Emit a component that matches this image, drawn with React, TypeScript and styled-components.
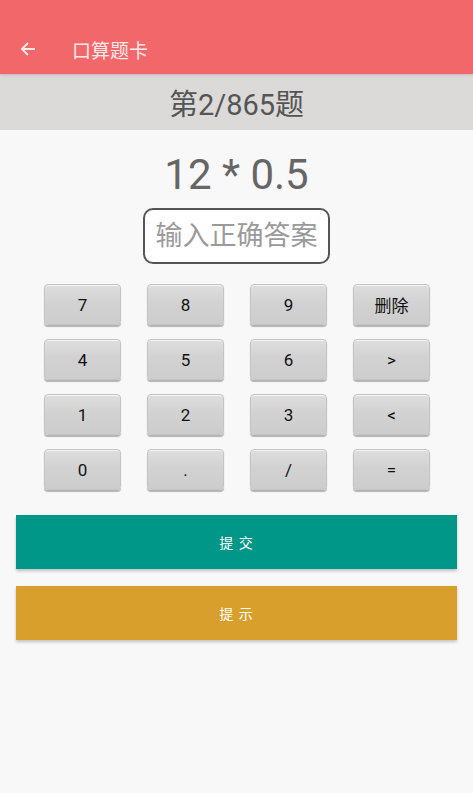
import React from "react";
import styled, { createGlobalStyle } from "styled-components";

const GlobalStyle = createGlobalStyle`
  html, body {
    margin: 0;
    padding: 0;
    background: #f8f8f8;
    font-family: Roboto, "Noto Sans CJK SC", sans-serif;
  }
`;

const Page = styled.div`
  width: 473px;
  min-height: 793px;
  background: #f8f8f8;
  display: flex;
  flex-direction: column;
`;

const TopBar = styled.header`
  height: 74px;
  background: #f26769;
  display: flex;
  align-items: center;
  padding: 24px 0 0 18px;
  box-sizing: border-box;
  position: relative;
  z-index: 1;
  box-shadow: 0 1px 3px rgba(0, 0, 0, 0.15);
`;

const BackButton = styled.button`
  width: 20px;
  height: 20px;
  padding: 0;
  border: none;
  background: none;
  display: flex;
  align-items: center;
  justify-content: center;
  margin-right: 34px;
`;

const Title = styled.h1`
  margin: 0;
  font-size: 19px;
  font-weight: 400;
  color: #fde9e9;
`;

const Counter = styled.div`
  height: 56px;
  background: #dcdad9;
  display: flex;
  align-items: center;
  justify-content: center;
  font-size: 29px;
  color: #555;
`;

const Question = styled.div`
  text-align: center;
  font-size: 42px;
  color: #666;
  margin-top: 18px;
  line-height: 54px;
`;

const AnswerInput = styled.input`
  display: block;
  margin: 6px auto 0;
  width: 187px;
  height: 56px;
  box-sizing: border-box;
  border: 2px solid #555;
  border-radius: 10px;
  background: #fff;
  font-family: Roboto, "Noto Sans CJK SC", sans-serif;
  font-size: 27px;
  text-align: center;
  color: #333;
  padding: 0;
  outline: none;

  &::placeholder {
    color: #9a9a9a;
  }
`;

const Keypad = styled.div`
  display: grid;
  grid-template-columns: repeat(4, 77px);
  grid-auto-rows: 41px;
  column-gap: 26px;
  row-gap: 14px;
  width: 386px;
  margin: 20px 0 0 44px;
`;

const Key = styled.button`
  border: 1px solid #c4c4c4;
  border-radius: 4px;
  background: linear-gradient(180deg, #dedede 0%, #d2d2d2 45%, #cdcdcd 100%);
  box-shadow: 0 2px 1px rgba(0, 0, 0, 0.28), inset 0 1px 0 rgba(255, 255, 255, 0.7);
  font-family: Roboto, "Noto Sans CJK SC", sans-serif;
  font-size: 17px;
  color: #111;
  padding: 0;
`;

const ActionButton = styled.button<{ $bg: string }>`
  display: block;
  width: 441px;
  height: 54px;
  margin: 0 0 0 16px;
  border: none;
  background: ${(p) => p.$bg};
  color: #fff;
  font-family: Roboto, "Noto Sans CJK SC", sans-serif;
  font-size: 14px;
  letter-spacing: 1px;
  box-shadow: 0 2px 3px rgba(0, 0, 0, 0.22);
`;

const Actions = styled.div`
  display: flex;
  flex-direction: column;
  gap: 17px;
  margin-top: 25px;
`;

const keys = ["7", "8", "9", "删除", "4", "5", "6", ">", "1", "2", "3", "<", "0", ".", "/", "="];

const App = (): JSX.Element => {
  return (
    <Page>
      <GlobalStyle />
      <TopBar>
        <BackButton aria-label="back">
          <svg width="18" height="18" viewBox="0 0 24 24" fill="none" stroke="#fde9e9" strokeWidth="2.6" strokeLinecap="square">
            <path d="M20 12H5" />
            <path d="M11 5l-7 7 7 7" />
          </svg>
        </BackButton>
        <Title>口算题卡</Title>
      </TopBar>
      <Counter>第2/865题</Counter>
      <Question>12 * 0.5</Question>
      <AnswerInput placeholder="输入正确答案" />
      <Keypad>
        {keys.map((k) => (
          <Key key={k}>{k}</Key>
        ))}
      </Keypad>
      <Actions>
        <ActionButton $bg="#009688">提 交</ActionButton>
        <ActionButton $bg="#d99f2d">提 示</ActionButton>
      </Actions>
    </Page>
  );
};

export default App;
